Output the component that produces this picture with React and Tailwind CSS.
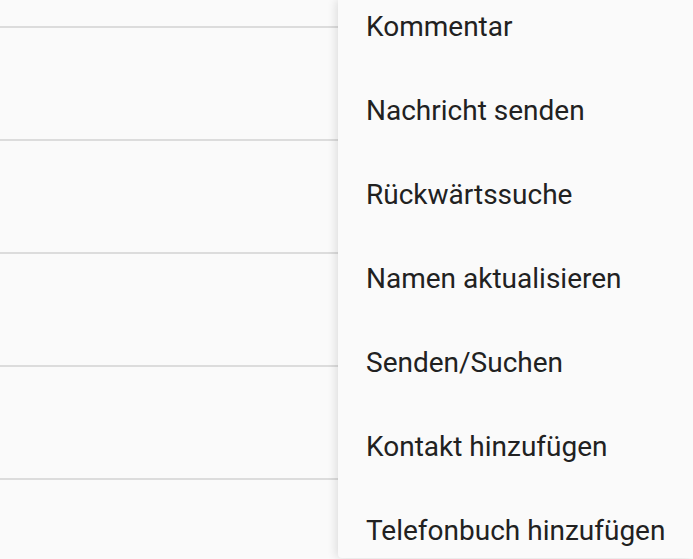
const items = [
  "Kommentar",
  "Nachricht senden",
  "Rückwärtssuche",
  "Namen aktualisieren",
  "Senden/Suchen",
  "Kontakt hinzufügen",
  "Telefonbuch hinzufügen",
];

function App() {
  return (
    <div className="relative w-[693px] h-[559px] overflow-hidden bg-[#fafafa] font-['Roboto',sans-serif]">
      {/* list behind the menu */}
      <div className="flex flex-col pt-[26px]">
        {[0, 1, 2, 3, 4].map((i) => (
          <div key={i} className="h-[113px] border-t-2 border-[#dcdcdc]" />
        ))}
      </div>

      {/* overflow menu */}
      <div className="absolute top-0 right-0 w-[355px] h-[558px] overflow-hidden rounded-bl-[4px] bg-[#fafafa] shadow-[-2px_0_10px_rgba(0,0,0,0.12)]">
        <ul className="-mt-[15px]">
          {items.map((label) => (
            <li key={label} className="h-[84px] flex items-center pl-[28px] text-[28px] text-[#212121]">
              {label}
            </li>
          ))}
        </ul>
      </div>
    </div>
  );
}

export default App;
